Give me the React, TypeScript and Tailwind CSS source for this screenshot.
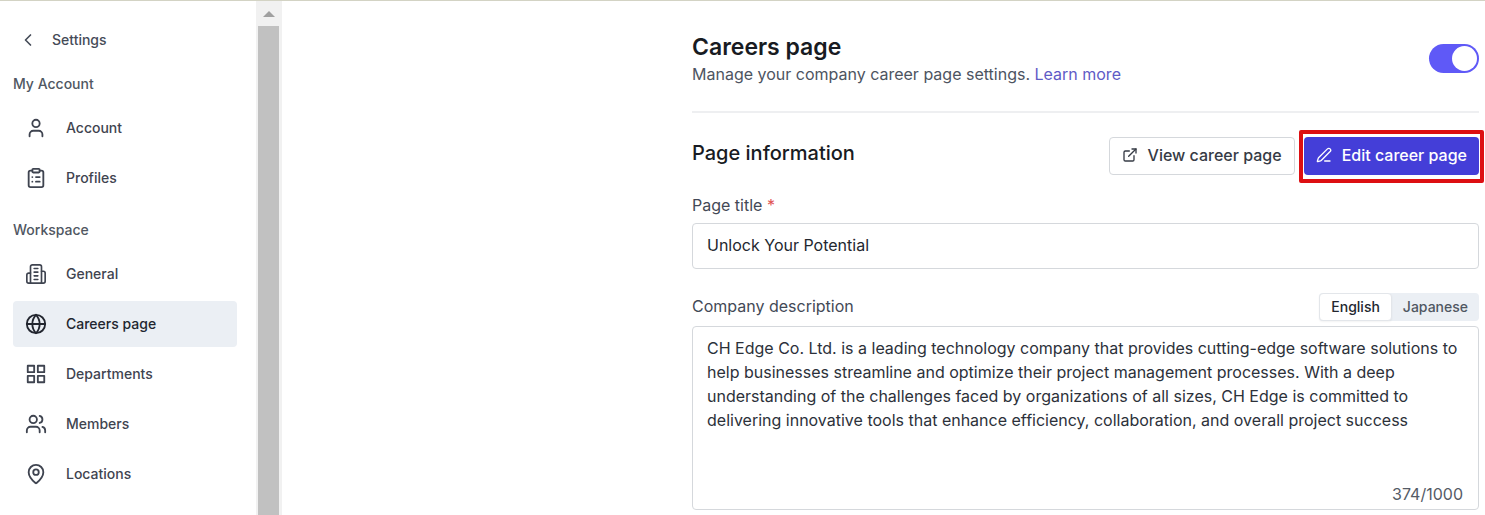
import { useState, type ReactNode } from "react";
import {
  ChevronLeft, ClipboardList, ExternalLink, Globe, MapPin, PenLine, User, Users,
} from "lucide-react";
import clsx from "clsx";

type Item = { label: string; icon: ReactNode };
type Lang = "English" | "Japanese";

const ICON = "h-[22px] w-[22px] shrink-0";

function BuildingIcon() {
  return (
    <svg viewBox="0 0 24 24" fill="none" stroke="currentColor" strokeWidth={1.8} strokeLinecap="round" strokeLinejoin="round" className={ICON}>
      <path d="M6 22V4a2 2 0 0 1 2-2h8a2 2 0 0 1 2 2v18Z" />
      <path d="M6 11H4a2 2 0 0 0-2 2v7a2 2 0 0 0 2 2h2" />
      <path d="M18 9h2a2 2 0 0 1 2 2v9a2 2 0 0 1-2 2h-2" />
      <path d="M10 6h4M10 10h4M10 14h4M10 18h4" />
    </svg>
  );
}

function GridIcon() {
  return (
    <svg viewBox="0 0 24 24" fill="none" stroke="currentColor" strokeWidth={2} strokeLinejoin="round" className={ICON}>
      <path d="M3 3h7v7H3zM14 3h7v7h-7zM14 14h7v7h-7zM3 14h7v7H3z" />
    </svg>
  );
}

const ACCOUNT: Item[] = [
  { label: "Account", icon: <User className={ICON} /> },
  { label: "Profiles", icon: <ClipboardList className={ICON} /> },
];

const WORKSPACE: Item[] = [
  { label: "General", icon: <BuildingIcon /> },
  { label: "Careers page", icon: <Globe className={ICON} /> },
  { label: "Departments", icon: <GridIcon /> },
  { label: "Members", icon: <Users className={ICON} /> },
  { label: "Locations", icon: <MapPin className={ICON} /> },
];

const DESCRIPTION =
  "CH Edge Co. Ltd. is a leading technology company that provides cutting-edge software solutions to help businesses streamline and optimize their project management processes. With a deep understanding of the challenges faced by organizations of all sizes, CH Edge is committed to delivering innovative tools that enhance efficiency, collaboration, and overall project success";

function NavGroup({ title, items, active }: { title: string; items: Item[]; active?: string }) {
  return (
    <section>
      <h2 className="text-sm leading-5 font-medium text-[#505762]">{title}</h2>
      <ul className="mt-[11px] flex flex-col gap-1">
        {items.map(it => (
          <li key={it.label}>
            <a
              href="#"
              aria-current={it.label === active ? "page" : undefined}
              className={clsx(
                "flex h-[46px] items-center gap-[19px] rounded px-3 text-sm font-medium",
                it.label === active ? "bg-[#ebeff4] text-[#22262f]" : "text-[#3f4450]"
              )}
            >
              {it.icon}
              {it.label}
            </a>
          </li>
        ))}
      </ul>
    </section>
  );
}

function Sidebar() {
  return (
    <nav className="w-64 shrink-0 pt-[27px] pr-[19px] pl-[13px]">
      <a href="#" className="flex items-center gap-3.5 pl-[5px] text-sm leading-6 font-medium text-[#454b57]">
        <ChevronLeft className="h-5 w-5" />
        Settings
      </a>
      <div className="mt-[22px] flex flex-col gap-[19px]">
        <NavGroup title="My Account" items={ACCOUNT} />
        <NavGroup title="Workspace" items={WORKSPACE} active="Careers page" />
      </div>
    </nav>
  );
}

function Scrollbar() {
  return (
    <div aria-hidden className="flex w-[26px] shrink-0 flex-col bg-[#f1f1f1] pr-[3px] pl-0.5">
      <div className="flex h-[25px] items-center justify-center">
        <svg viewBox="0 0 12 6" className="h-1.5 w-3 fill-[#a0a0a0]"><path d="M6 0l6 6H0z" /></svg>
      </div>
      <div className="flex-1 bg-[#c1c1c1]" />
    </div>
  );
}

export default function App() {
  const [enabled, setEnabled] = useState(true);
  const [title, setTitle] = useState("Unlock Your Potential");
  const [lang, setLang] = useState<Lang>("English");
  const [text, setText] = useState(DESCRIPTION);

  return (
    <div className="flex min-h-screen border-t border-[#d3d3c4] bg-white font-[Inter,sans-serif]">
      <Sidebar />
      <Scrollbar />
      <main className="mr-1.5 ml-auto max-w-[787px] flex-1 pt-8">
        <header className="flex items-start justify-between border-b-2 border-[#eeeff1] pb-[25px]">
          <div>
            <h1 className="text-[23px] leading-7 font-semibold text-[#181b22]">Careers page</h1>
            <p className="mt-px text-base leading-6 text-[#4d5461]">
              Manage your company career page settings. <a href="#" className="text-[#5f5bc6]">Learn more</a>
            </p>
          </div>
          <label className="mt-[11px] flex h-[29px] w-[50px] items-center rounded-full bg-[#d1d5db] p-0.5 has-checked:bg-[#5f59f7]">
            <input
              type="checkbox"
              role="switch"
              aria-label="Careers page enabled"
              checked={enabled}
              onChange={e => setEnabled(e.target.checked)}
              className="peer h-0 w-0 appearance-none"
            />
            <span className="h-[25px] w-[25px] rounded-full bg-white peer-checked:ml-auto" />
          </label>
        </header>

        <div className="mt-6 flex items-start justify-between">
          <h2 className="text-xl leading-8 font-medium text-[#181b22]">Page information</h2>
          <div className="flex gap-[9px]">
            <button className="flex h-[38px] items-center gap-2.5 rounded border border-[#d5d8dc] px-3 pb-0.5 text-base font-medium text-[#363b45]">
              <ExternalLink className="h-4 w-4" />
              View career page
            </button>
            <button className="relative flex h-[38px] items-center gap-2.5 rounded bg-[#443ed8] px-3 pb-0.5 text-base font-medium text-white">
              <PenLine className="h-4 w-4" />
              Edit career page
              <span className="pointer-events-none absolute -inset-x-[5px] -top-[7px] -bottom-2 rounded-xs border-4 border-[#dd0f12]" />
            </button>
          </div>
        </div>

        <label htmlFor="title" className="mt-[18px] block text-base leading-6 text-[#434956]">
          Page title <span className="text-[#e05252]">*</span>
        </label>
        <input
          id="title"
          value={title}
          onChange={e => setTitle(e.target.value)}
          className="mt-[6px] block h-[46px] w-full rounded border border-[#d5d8dc] px-3.5 pb-0.5 text-base text-[#23272f]"
        />

        <div className="mt-6 flex items-start justify-between">
          <label htmlFor="description" className="mt-px text-base leading-6 text-[#434956]">Company description</label>
          <div className="flex h-7 rounded bg-[#ebeff4] text-sm font-medium">
            {(["English", "Japanese"] as Lang[]).map(l => (
              <button
                key={l}
                onClick={() => setLang(l)}
                aria-pressed={l === lang}
                className={clsx("rounded px-[11px]", l === lang ? "border border-[#e3e6ea] bg-white text-[#23272f] shadow-xs" : "text-[#505762]")}
              >
                {l}
              </button>
            ))}
          </div>
        </div>
        <div className="relative mt-[5px]">
          <textarea
            id="description"
            value={text}
            onChange={e => setText(e.target.value)}
            className="block h-[184px] w-full resize-none rounded border border-[#d5d8dc] px-3.5 py-[9px] text-base leading-6 text-[#2c313a]"
          />
          <span className="absolute right-4 bottom-1 text-base leading-6 text-[#555b66]">374/1000</span>
        </div>
      </main>
    </div>
  );
}
